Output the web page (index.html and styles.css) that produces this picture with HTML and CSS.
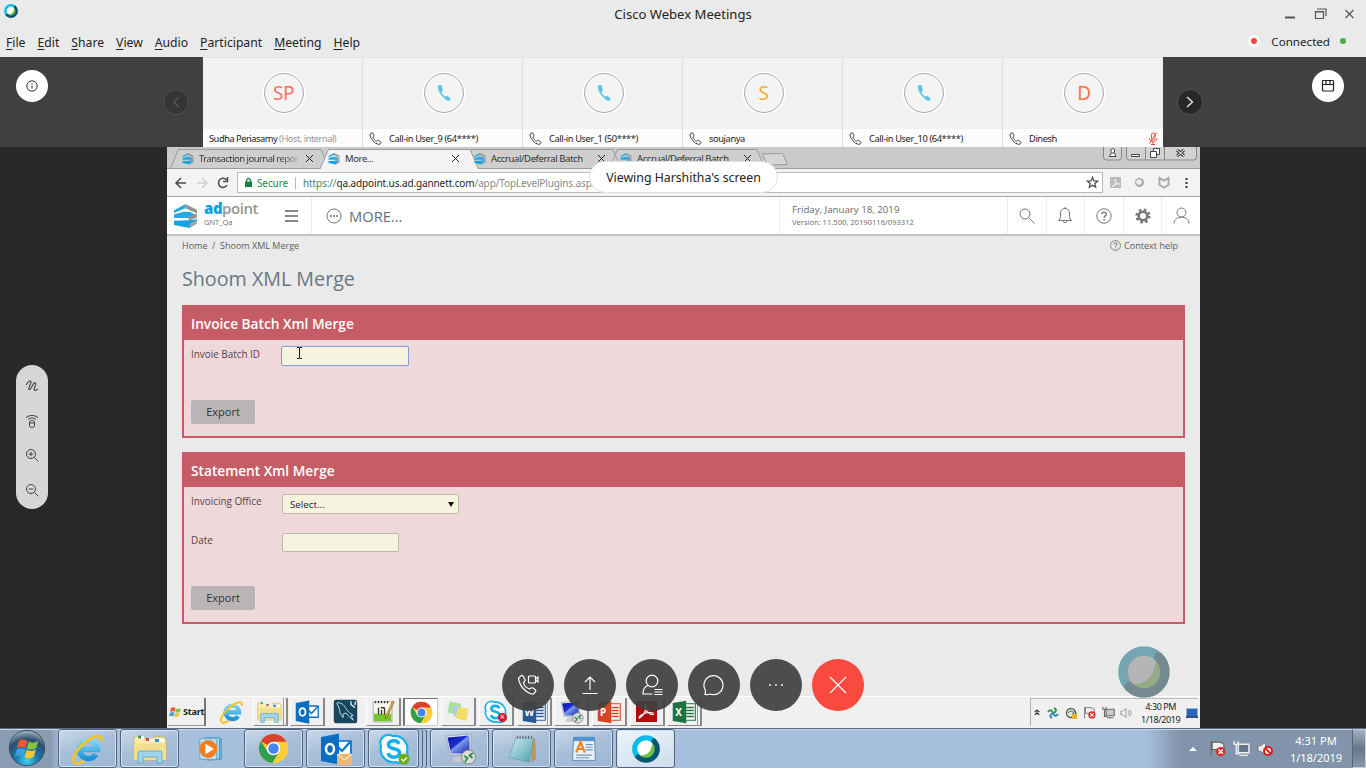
FILE: index.html
```html
<!DOCTYPE html>
<html lang="en">
<head>
<meta charset="utf-8">
<title>Cisco Webex Meetings</title>
<link rel="stylesheet" href="styles.css">
</head>
<body>
<svg class="defs" width="0" height="0">
  <defs>
    <linearGradient id="gScreen" x1="0" y1="0" x2="1" y2="1"><stop offset="0" stop-color="#0a12a8"/><stop offset=".45" stop-color="#1c2fd0"/><stop offset=".5" stop-color="#7d9bf0"/><stop offset="1" stop-color="#0f1fae"/></linearGradient>
    <linearGradient id="gIe" x1="0" y1="0" x2="0" y2="1"><stop offset="0" stop-color="#7fd6f7"/><stop offset="1" stop-color="#1e93d6"/></linearGradient>
    <linearGradient id="gFolder" x1="0" y1="0" x2="0" y2="1"><stop offset="0" stop-color="#fdf3b8"/><stop offset="1" stop-color="#e8c766"/></linearGradient>
    <radialGradient id="gOrb" cx=".5" cy=".85" r=".8"><stop offset="0" stop-color="#3fd5f5"/><stop offset=".4" stop-color="#1877a8"/><stop offset=".75" stop-color="#2b4f6e"/><stop offset="1" stop-color="#8fa6b8"/></radialGradient>
    <linearGradient id="gNote" x1="0" y1="0" x2="1" y2="1"><stop offset="0" stop-color="#d3eef2"/><stop offset="1" stop-color="#4a9fb0"/></linearGradient>
  </defs>
  <symbol id="phone" viewBox="0 0 24 24"><path d="M3 2.500 5.500 1.500c.6-.2 1.200 0 1.500.5L9.200 6.800c.3.600.1 1.200-.4 1.500L7.200 9.500c1.200 3.200 4 6.200 7.200 7.600l1.700-1.400c.4-.4 1.100-.5 1.600-.1l4.100 3c.5.4.6 1 .2 1.500l-1.600 1.900c-.7.9-1.900 1.200-3 .8C9.500 20.500 3.500 13.600 1.700 5.600 1.400 4.300 1.900 3.100 3 2.500z" fill="none" stroke="currentColor" stroke-width="1.600"/></symbol>
  <symbol id="handset" viewBox="0 0 16 20"><path d="M1 1h4.500L6.500 7 5 9c.8 2 2.200 3.800 4.500 5.200L11.500 13l3.500 2.500V19c-3 0-6.500-2-9.500-6C2 9 .8 5 1 1z" fill="#5fc3e8"/></symbol>
  <symbol id="ring" viewBox="0 0 52 52"><circle cx="26" cy="26" r="18" fill="var(--core)"/><path d="M38 12a18 18 0 1 1-26 26C28 40 38 29 38 12z" fill="var(--leaf)"/><path d="M11.150 40.850A21 21 0 0 1 40.850 11.150" fill="none" stroke="var(--light)" stroke-width="9.500"/><path d="M40.850 11.150A21 21 0 0 1 11.150 40.850" fill="none" stroke="var(--dark)" stroke-width="9.500" stroke-linecap="round"/></symbol>
  <symbol id="adp" viewBox="0 0 24 24"><path d="M1 7 12 1v4L1 9.500z" fill="#2ba7df"/><path d="m12 1 11 5.500v3.500L12 5z" fill="#9a9591"/><path d="m1 11 9-2.500h6L23 12l-8 2.500H1z" fill="#2ba7df"/><path d="m15 13.500 8-3.500v4l-8 3z" fill="#9a9591"/><path d="m1 17 14-.5 8-1v3L16 24 1 21z" fill="#13a3e4"/><path d="m16 20 7-3.500v3.500l-7 4z" fill="#aaa5a0"/></symbol>
  <symbol id="ie" viewBox="0 0 32 32"><path d="M24 21.500A9 9 0 1 1 25.500 16.500H10" fill="none" stroke="url(#gIe)" stroke-width="5.600"/><path d="M9.500 15.800h16" stroke="#55bbea" stroke-width="3.800"/><path d="M29 8c1.500-5-3-7-10-2.500C9 11-1.500 24 2 29c2 3 7 .5 10-1.500" fill="none" stroke="#f5c526" stroke-width="2.700"/></symbol>
  <symbol id="folder" viewBox="0 0 34 32"><path d="M1 4h10l1 2h9V4h10l2 3v20H1z" fill="url(#gFolder)" stroke="#d4b050" stroke-width=".8"/><path d="M4 3h7v3H4z" fill="#fff"/><path d="M5 2.500h3v3H5z" fill="#2aa33a"/><path d="M13 5.500h8v3h-8z" fill="#fff"/><path d="M13 5h3v3h-3z" fill="#d34b3b"/><path d="M22 6h9v3h-9z" fill="#fff"/><path d="M22 6h4v3h-4z" fill="#3c8fd6"/><path d="M1 11h32v16H1z" fill="#f3dd91"/><path d="M5 30V20q0-2 2-2h20q2 0 2 2v10h-5v-6H10v6z" fill="#9fd3ee" stroke="#5fa7cc" stroke-width=".9"/></symbol>
  <symbol id="wmp" viewBox="0 0 32 32"><path d="m11 4 15 1v22l-15 1z" fill="#79b7dd" stroke="#5395c0"/><path d="M8 4h16v23H8z" fill="#a5d2ea" stroke="#5395c0"/><path d="M3 5h18v22H3z" fill="#bbdff0" stroke="#6aa5c8"/><circle cx="12" cy="16" r="9.500" fill="#f57d20"/><path d="m9 10.500 9 5.500-9 5.500z" fill="#fff"/></symbol>
  <symbol id="chrome" viewBox="0 0 32 32"><circle cx="16" cy="16" r="15" fill="#fccd3a"/><path d="M16 16 3 8.500a15 15 0 0 1 26.500 1.200H16z" fill="#d8412f"/><path d="M3 8.500 10.500 20 16 16l5.500 4L15 31A15 15 0 0 1 3 8.500z" fill="#2f9e4d"/><path d="M16 9h13.300A15 15 0 0 1 15 31l7.500-12z" fill="#fccd3a"/><circle cx="16" cy="16" r="7" fill="#fff"/><circle cx="16" cy="16" r="5.400" fill="#4384f3"/></symbol>
  <symbol id="outlook" viewBox="0 0 32 32"><path d="M16 8h15v15H16z" fill="#fff" stroke="#0a6fc2" stroke-width="1.700"/><path d="m17 13 5 5 8-9" fill="none" stroke="#0a6fc2" stroke-width="2"/><path d="m1 4 18-3.500v31L1 28z" fill="#0a6fc2"/><ellipse cx="10" cy="16" rx="4" ry="5" fill="none" stroke="#fff" stroke-width="2.500"/></symbol>
  <symbol id="skype" viewBox="0 0 32 32"><path d="M9 2a8 8 0 0 1 6 1 13 13 0 0 1 14 16 8 8 0 0 1-11 10A13 13 0 0 1 3 13 8 8 0 0 1 9 2z" fill="#fff" stroke="#16b0ee" stroke-width="2.200"/><path d="M21 11c-1-2.500-3-3.300-5-3.300-3 0-5.500 1.500-5.500 4 0 5.500 11 2.500 11 8 0 3-2.500 4.500-5.500 4.500-2.800 0-5-1.200-6-4" fill="none" stroke="#16aeea" stroke-width="3.600"/></symbol>
  <symbol id="rdp" viewBox="0 0 32 32"><path d="m10 24 9-1 3 6H8z" fill="#c5c8cc"/><path d="m2 3 25-2v21L6 22z" fill="#e5e9f0" stroke="#8d97a6" stroke-width=".7"/><path d="m3.500 4.500 22-2v18L7 20.500z" fill="url(#gScreen)"/><circle cx="24.500" cy="24" r="7" fill="#d9dbdc" stroke="#888"/><path d="m20 23 3.500 2-2.500 4m8-9-3.500 2.500 3 2.500" fill="none" stroke="#268b43" stroke-width="1.700"/></symbol>
  <symbol id="notepad" viewBox="0 0 32 32"><path d="m26 4 4 1 1 22-5 3z" fill="#b99957"/><path d="m10 4 18 1-4 25-22-5z" fill="url(#gNote)" stroke="#6a99a5" stroke-width=".6"/><path d="M11 2v3m3-3v3m3-3v3m3-3v3m3-3v3m3-3v3" stroke="#555"/></symbol>
  <symbol id="wordpad" viewBox="0 0 32 32"><path d="M4 3h24l1 26H3z" fill="#e9f1fa" stroke="#5b84ad"/><path d="M4 2h24v5H4z" fill="#5595cf"/><path d="M18 11h8m-8 3h8m-8 3h8M7 23h18M7 26h15" stroke="#6f96bf" stroke-width="1.300"/><path d="M7 20 12 8l5 12M9 16h6" fill="none" stroke="#f08020" stroke-width="2.500"/></symbol>
  <symbol id="mysql" viewBox="0 0 32 32"><rect x="1" y="1" width="30" height="30" rx="3" fill="#17465f"/><path d="M5 5c5-1 9 2 12 8 3 4 6 6 9 8l-3 .500 3 5.500-6-5-3-4-4 1 0 5-4-6C9 14 7 10 5 5z" fill="none" stroke="#c6dbe4" stroke-width="1.200"/><path d="M23 3v4l5 4M29 3l-1 5" stroke="#dce9ee" stroke-width="1.800" fill="none"/></symbol>
  <symbol id="npp" viewBox="0 0 32 32"><path d="M3 3h25v27H3z" fill="#f7f7f0" stroke="#999"/><path d="M4 19h23v10H4z" fill="#75c62c"/><path d="M10 11v9m3-9h5m-4 3v6m4-9v9M6 2v3m4-3v3m4-3v3m4-3v3m4-3v3" stroke="#333" stroke-width="1.700"/><path d="m29 2 2 1-9 20-3 3 1-5z" fill="#e9ae29" stroke="#66521e" stroke-width=".7"/></symbol>
  <symbol id="sticky" viewBox="0 0 32 32"><path d="m5 2 15 3-3 15-15-3z" fill="#a9dfa0"/><path d="m8 10 12-3 3 12-12 3z" fill="#a9cdea"/><path d="m16 9 14 3-3 16-14-4z" fill="#f3dd69"/></symbol>
  <symbol id="office" viewBox="0 0 32 32"><path d="M15 5h16v22H15z" fill="#fff" stroke="var(--c)" stroke-width="1.500"/><path d="M19 10h10m-10 4h10m-10 4h10m-10 4h10" stroke="var(--c)" stroke-width="1.700"/><path d="m1 4 18-3v30L1 28z" fill="var(--c)"/></symbol>
  <symbol id="flag" viewBox="0 0 16 16"><path d="M2 1v14M3 2h7l4 2v5H3z" fill="#eef0f2" stroke="#666" stroke-width="1"/><circle cx="11" cy="11" r="4.500" fill="#d92f2b"/><path d="m9 9 4 4m0-4-4 4" stroke="#fff" stroke-width="1.400"/></symbol>
  <symbol id="net" viewBox="0 0 16 16"><path d="M5 4h10v8H5z" fill="var(--s,#66768a)" stroke="var(--e,#eee)" stroke-width="1.400"/><path d="M6 14.500h8M1 1v3h4V1M3 4v9h3" fill="none" stroke="var(--e,#eee)" stroke-width="1.300"/></symbol>
  <symbol id="spk" viewBox="0 0 16 16"><path d="M1 5.500h2.500L8 2v12L3.500 10.500H1z" fill="#eee" stroke="#777" stroke-width=".8"/></symbol>
  <symbol id="winflag" viewBox="0 0 20 20"><path d="M3 4c3-2 5-1 7 0L8.500 9.500C6.500 8.500 4 8.500 1.500 10z" fill="#f0562b"/><path d="M11 4.500c2 1 4 1.500 7.500-.5L17 9.500c-3 2-5 1.500-7.500.5z" fill="#86c440"/><path d="M1.300 11c3-1.700 5-1.300 7-.3L7 16.500c-2-1-4-1.500-7.200.3z" fill="#3d9fe0"/><path d="M9.300 11c2 1 4 1.500 7.400-.3L15 16.500c-3 2-5 1.500-7.300.5z" fill="#fbc52d"/></symbol>
  <symbol id="help" viewBox="0 0 16 16"><circle cx="8" cy="8" r="7.200" fill="none" stroke="currentColor" stroke-width="1"/><path d="M5.800 6.300c0-3 4.500-2.800 4.500-.2 0 1.800-2.200 1.700-2.200 3.700M8.100 11v1.400" fill="none" stroke="currentColor" stroke-width="1.400"/></symbol>
</svg>

<header class="titlebar">
  <div class="caption">
    <svg class="applogo ring" width="14" height="14"><use href="#ring"/></svg>
    <span class="apptitle">Cisco Webex Meetings</span>
    <svg class="winbtns" width="72" height="14" fill="none" stroke="#555"><path d="M1 10.500h10" stroke-width="2"/><path d="M31.500 4.500h8v7h-8zM31 5h9M33 2h9v7" stroke-width="1.200"/><path d="m61.500 3 8 8m0-8-8 8" stroke-width="1.200"/></svg>
  </div>
  <div class="menurow">
    <nav class="menu"><span><u>F</u>ile</span><span><u>E</u>dit</span><span><u>S</u>hare</span><span><u>V</u>iew</span><span><u>A</u>udio</span><span><u>P</u>articipant</span><span><u>M</u>eeting</span><span><u>H</u>elp</span></nav>
    <div class="status"><i class="rec"></i><span>Connected</span><i class="ok"></i></div>
  </div>
</header>

<section class="strip">
  <div class="stripside left"><span class="round"><svg width="12" height="12" fill="none" stroke="#333"><circle cx="6" cy="6" r="5.200"/><path d="M6 5.500v3M6 3.500v1"/></svg></span><span class="arrow dim"><svg width="8" height="12" fill="none" stroke="#707070"><path d="M7 1 1.500 6 7 11"/></svg></span></div>
  <div class="tiles">
    <div class="tile"><div class="face"><b class="av" style="color:#f96f66">SP</b></div><div class="who host"><span>Sudha Periasamy <em>(Host, internal)</em></span></div></div>
    <div class="tile"><div class="face"><b class="av"><svg width="14" height="18"><use href="#handset"/></svg></b></div><div class="who"><svg width="13" height="13"><use href="#phone"/></svg><span>Call-in User_9 (64****)</span></div></div>
    <div class="tile"><div class="face"><b class="av"><svg width="14" height="18"><use href="#handset"/></svg></b></div><div class="who"><svg width="13" height="13"><use href="#phone"/></svg><span>Call-in User_1 (50****)</span></div></div>
    <div class="tile"><div class="face"><b class="av" style="color:#f5ae2f">S</b></div><div class="who"><svg width="13" height="13"><use href="#phone"/></svg><span>soujanya</span></div></div>
    <div class="tile"><div class="face"><b class="av"><svg width="14" height="18"><use href="#handset"/></svg></b></div><div class="who"><svg width="13" height="13"><use href="#phone"/></svg><span>Call-in User_10 (64****)</span></div></div>
    <div class="tile"><div class="face"><b class="av" style="color:#fa7440">D</b></div><div class="who"><svg width="13" height="13"><use href="#phone"/></svg><span>Dinesh</span><svg class="mute" width="10" height="13" fill="none" stroke="#f4483f"><rect x="3.500" y="1" width="3.500" height="7" rx="1.700"/><path d="M1.500 6c0 5 7.500 5 7.500 0M5 10v2.500M3 12.500h4M8.500.5l-7 11"/></svg></div></div>
  </div>
  <div class="stripside right"><span class="arrow"><svg width="8" height="12" fill="none" stroke="#eee" stroke-width="1.300"><path d="m1 1 5.500 5L1 11"/></svg></span><span class="round"><svg width="14" height="14" fill="none" stroke="#222" stroke-width="1.200"><rect x="1.500" y="1.500" width="11" height="10.500" rx="1"/><path d="M1.500 5.500h11M5 2v3M9 2v3"/></svg></span></div>
</section>

<main class="stage">
  <aside class="rail">
    <div class="tools">
      <svg width="14" height="14" viewBox="0 0 14 14" fill="none" stroke="#444" stroke-width="1.100"><path d="M1 6C4 .5 7.500 1 5.500 5L4 8.500c-1 3 1 2.500 2.500 0L8 5.500c1.500-3 3.500-2 2.500.5L9.500 9c-1 3 .5 3 3.500 1"/></svg>
      <svg width="14" height="14" viewBox="0 0 14 14" fill="none" stroke="#444"><rect x="4.500" y="6.500" width="5" height="7" rx="2.300"/><path d="M4.500 9h5M1 3.500Q7-.8 13 3.500M3 5.500Q7 2.200 11 5.500"/></svg>
      <svg width="14" height="14" viewBox="0 0 14 14" fill="none" stroke="#444"><circle cx="6" cy="6" r="4.500"/><path d="m9.300 9.300 4 4M6 3.800v4.400M3.800 6h4.400"/></svg>
      <svg width="14" height="14" viewBox="0 0 14 14" fill="none" stroke="#444"><circle cx="6" cy="6" r="4.500"/><path d="m9.300 9.300 4 4M3.800 6h4.400"/></svg>
    </div>
  </aside>

  <div class="browser">
    <div class="tabs">
      <svg class="tabshapes" width="1033" height="22" fill="#cfcfcf" stroke="#9b9b9b"><path d="M3.500 21.500 11.500 2.500H154l8 19z"/><path d="M442.500 21.500 450.500 2.500H590l8 19zM296.500 21.500 304.500 2.500H446l8 19z"/><path d="m595.500 7 19-.5q1 0 1.500 1l4.500 10-18 .5q-2 0-2.500-1z" fill="#d6d6d6"/><path d="M0 21.500h1033"/><path d="m152.500 23 9-20.500h141.500l9 20.500z" fill="#f3f2f4"/></svg>
      <div class="tab"><svg width="12" height="13"><use href="#adp"/></svg><span class="fade">Transaction journal repor</span><i class="x"></i></div>
      <div class="tab"><svg width="12" height="13"><use href="#adp"/></svg><span>More...</span><i class="x"></i></div>
      <div class="tab"><svg width="12" height="13"><use href="#adp"/></svg><span>Accrual/Deferral Batch</span><i class="x"></i></div>
      <div class="tab"><svg width="12" height="13"><use href="#adp"/></svg><span>Accrual/Deferral Batch</span><i class="x"></i></div>
      <svg class="chromebtns" width="96" height="14" fill="none" stroke="#858585"><path d="M1.500 0v10q0 3 3 3h12q3 0 3-3V0M24.500 0v10q0 3 3 3h64q3 0 3-3V0M43.500 0v13M62.500 0v13" fill="#d2d2d2"/><path d="M7.500 9.500h6.500L12.500 6h-3.500zM9 5.500q-1-4 1.700-4t1.800 4" fill="#fff" stroke="#444"/><path d="M29.500 7.500h8v2h-8z" fill="#fff" stroke="#444"/><path d="M51.500 1.500h6v6h-6z" fill="#fff" stroke="#444"/><path d="M48.500 4.500h6v6h-6z" fill="#fff" stroke="#444"/><path d="m75 3 7 6m0-6-7 6" stroke="#444" stroke-width="3"/><path d="m75 3 7 6m0-6-7 6" stroke="#fff"/></svg>
    </div>
    <div class="toolbar">
      <svg width="62" height="16" fill="none" stroke="#4b4b4b" stroke-width="1.500"><path d="M13 8H3m5-5L3 8l5 5"/><path d="M24 8h10m-5-5 5 5-5 5" stroke="#d0d0d0"/><path d="M53.500 5a4.500 4.500 0 1 0 .5 5M54.500 2v4.500H50"/></svg>
      <div class="omni">
        <svg width="9" height="11"><path d="M2.500 5V3q2-3 4 0v2" fill="none" stroke="#1a7f42" stroke-width="1.300"/><path d="M1 4.500h7V10H1z" fill="#1a7f42"/></svg>
        <span class="secure">Secure</span><span class="url"><s>https://</s>qa.adpoint.us.ad.gannett.com<s class="g">/app/TopLevelPlugins.aspx</s></span>
        <svg class="star" width="13" height="13" viewBox="0 0 14 14" fill="none" stroke="#444" stroke-width="1.300"><path d="m7 1.500 1.500 3.800 4 .2-3 2.600 1 4L7 9.900l-3.500 2.200 1-4-3-2.600 4-.2z"/></svg>
      </div>
      <svg class="ext" width="84" height="14"><path d="M1 1h11v11H1z" fill="#bcbcbc"/><path d="M3 10.500c4-2 4.500-6 3.500-7s-1 2 1 3.500 3 2 3 1-3-.5-7 2.500" fill="none" stroke="#f5f5f5"/><circle cx="30.500" cy="6.500" r="4.500" fill="#aaa"/><circle cx="30" cy="6" r="2.800" fill="#eee"/><path d="M50.500 2v7l4.500 2.500L59.500 9V2L55 4.500z" fill="none" stroke="#aaa" stroke-width="2"/><path d="M77.500 2v2m0 2v2m0 2v2" stroke="#444" stroke-width="2.200"/></svg>
    </div>
    <div class="apphead">
      <div class="brand"><svg width="25" height="25"><use href="#adp"/></svg><div><div class="bn"><b>ad</b>point</div><div class="env">GNT_Qa</div></div></div>
      <div class="burger"><i></i><i></i><i></i></div>
      <div class="more"><svg width="16" height="16" fill="none" stroke="#6a7680"><circle cx="8" cy="8" r="7"/><path d="M4 8h2m1 0h2m1 0h2" stroke-width="1.500"/></svg><span>MORE...</span></div>
      <div class="when"><div>Friday, January 18, 2019</div><small>Version: 11.500, 20190116/093312</small></div>
      <div class="hicon"><svg width="16" height="16" fill="none" stroke="#777"><circle cx="6" cy="6" r="5"/><path d="m9.500 9.500 6 6"/></svg></div>
      <div class="hicon"><svg width="16" height="17" fill="none" stroke="#777"><path d="M1.500 13.500h13q-2-1-2-4V6c0-6-9-6-9 0v3.500q0 3-2 4zM6 14q2 3.500 4 0M8 0v1.500"/></svg></div>
      <div class="hicon"><svg width="16" height="16"><use href="#help"/></svg></div>
      <div class="hicon"><svg width="16" height="16" fill="none" stroke="#7b7675"><circle cx="8" cy="8" r="4.300" stroke-width="2.600"/><circle cx="8" cy="8" r="6.400" stroke-width="2.400" stroke-dasharray="2.500 2.527"/></svg></div>
      <div class="hicon"><svg width="17" height="17" fill="none" stroke="#777"><circle cx="8.500" cy="5.500" r="4.500"/><path d="M1 16.500c0-8.500 15-8.500 15 0"/></svg></div>
    </div>
    <div class="crumbs"><span>Home&nbsp; /&nbsp; Shoom XML Merge</span><span class="ctx"><svg width="11" height="11"><use href="#help"/></svg>Context help</span></div>
    <h1>Shoom XML Merge</h1>
    <section class="panel first">
      <h2>Invoice Batch Xml Merge</h2>
      <div class="row"><label>Invoie Batch ID</label><div class="field focus"><svg width="7" height="13" fill="none" stroke="#111"><path d="M1 .5h2l.5.5.5-.5h2M3.500 1v10M1 11.500h2l.5-.5.5.5h2"/></svg></div></div>
      <div class="btn">Export</div>
    </section>
    <section class="panel second">
      <h2>Statement Xml Merge</h2>
      <div class="row"><label>Invoicing Office</label><div class="field select"><span>Select...</span><i></i></div></div>
      <div class="row date"><label>Date</label><div class="field short"></div></div>
      <div class="btn">Export</div>
    </section>

    <div class="innerbar">
      <div class="start"><svg width="13" height="14"><use href="#winflag"/></svg>Start</div>
      <div class="slots">
        <div class="slot flat"><svg width="24" height="24"><use href="#ie"/></svg></div>
        <div class="slot stack"><svg width="25" height="24"><use href="#folder"/></svg></div>
        <div class="slot"><svg width="24" height="24"><use href="#outlook"/></svg></div>
        <div class="slot flat"><svg width="25" height="25"><use href="#mysql"/></svg></div>
        <div class="slot"><svg width="24" height="25"><use href="#npp"/></svg></div>
        <div class="slot on"><svg width="23" height="23"><use href="#chrome"/></svg></div>
        <div class="slot"><svg width="26" height="24"><use href="#sticky"/></svg></div>
        <div class="slot"><svg width="25" height="24"><use href="#skype"/></svg><em class="dot bad">×</em></div>
        <div class="slot stack"><svg width="24" height="24" style="--c:#2b579a"><use href="#office"/></svg><em class="ltr">W</em></div>
        <div class="slot"><svg width="25" height="24"><use href="#rdp"/></svg></div>
        <div class="slot"><svg width="24" height="24" style="--c:#d24726"><use href="#office"/></svg><em class="ltr">P</em></div>
        <div class="slot"><svg width="23" height="23" viewBox="0 0 23 23"><path d="M1 1h21v21H1z" fill="#b30b0b"/><path d="M4.500 18c5-3 7-9 6.500-12.500-.5-2-2-.5-1 2 1.500 4 5 7.500 8 7 1.500-1 0-2-3-2-4 0-9 2-10.500 4-.6 1-.4 1.700 0 1.500z" fill="none" stroke="#fff" stroke-width="1.200"/></svg></div>
        <div class="slot stack"><svg width="24" height="24" style="--c:#1e7145"><use href="#office"/></svg><em class="ltr">X</em></div>
      </div>
      <div class="tray">
        <span class="chev">«</span>
        <svg width="12" height="12" fill="none" stroke-width="2"><path d="M1 5q3-4 5 1M7 1q4 2 0 5" stroke="#3a9b47"/><path d="M11 7q-3 4-5-1M5 11Q1 9 6 6" stroke="#2a83bd"/></svg>
        <svg width="13" height="12"><circle cx="6" cy="6" r="4.500" fill="#dde5dc" stroke="#52694f" stroke-width="1.400"/><path d="M3 6q3-4 6 0" fill="none" stroke="#52694f"/><path d="M7 7h5v5H7z" fill="#e7b32c"/><path d="M8 7V5.500q1.500-2 3 0V7" fill="none" stroke="#555"/></svg>
        <svg width="13" height="13"><use href="#flag"/></svg>
        <svg width="13" height="13" style="--s:#ccc;--e:#666"><use href="#net"/></svg>
        <svg width="12" height="12" viewBox="0 0 16 16"><path d="M1 5.500h2.500L8 2v12L3.500 10.500H1zM11 5q2 3 0 6M13 3q4 5 0 10" fill="none" stroke="#888"/></svg>
        <div class="clock">4:30 PM<br>1/18/2019</div>
        <svg width="12" height="10"><path d="M.5.500h11v8H.5z" fill="#2767bb" stroke="#94b4da"/><path d="M0 8h12v2H0z" fill="#344c76"/></svg>
      </div>
    </div>

    <div class="viewing">Viewing Harshitha's screen</div>
    <svg class="badge ring" width="52" height="52"><use href="#ring"/></svg>
    <div class="controls">
      <span><svg width="22" height="22" viewBox="0 0 22 22" fill="none" stroke="#fff" stroke-width="1.200"><path d="m2.500 3 2-1.500q1-.5 1.500.5L8 5.500q.5 1-.5 2L6.500 8.500c.5 3 3 5.500 6 6.500l1.500-1q1-.5 2 0l2.500 2q.8.800 0 1.700L17 19.500q-1.500 1-4 0Q5 16 2 7q-1-3 .5-4z"/><rect x="11.500" y="2" width="7" height="7" rx="1"/><path d="M18.500 5 21 3v5l-2.500-2"/></svg></span>
      <span><svg width="20" height="20" fill="none" stroke="#fff" stroke-width="1.200"><path d="M10 15V2M5 7l5-5 5 5M2.500 18.500h15"/></svg></span>
      <span><svg width="22" height="22" viewBox="0 0 22 22" fill="none" stroke="#fff" stroke-width="1.200"><circle cx="11" cy="7" r="5.800"/><path d="M6.800 11.500C3 13 2 16 2 20h9.500M13.500 15.500h8m-8 2.500h8m-8 2.500h8"/></svg></span>
      <span><svg width="22" height="22" viewBox="0 0 22 22" fill="none" stroke="#fff" stroke-width="1.200"><path d="M2 20.500q.8-2 .3-4.500A9.500 9.500 0 1 1 7 20q-2 1-5 .5z"/></svg></span>
      <span><svg width="16" height="4" fill="#fff"><circle cx="2" cy="2" r=".9"/><circle cx="8" cy="2" r=".9"/><circle cx="14" cy="2" r=".9"/></svg></span>
      <span class="end"><svg width="18" height="18" stroke="#fff" stroke-width="1.200"><path d="m1 1 16 16m0-16L1 17"/></svg></span>
    </div>
  </div>
</main>

<footer class="taskbar">
  <div class="orb"><svg width="38" height="38"><circle cx="19" cy="19" r="17.700" fill="url(#gOrb)" stroke="#3d5166"/><use href="#winflag" x="7" y="7" width="25" height="25"/></svg></div>
  <div class="apps">
    <div class="app"><svg width="32" height="32"><use href="#ie"/></svg></div>
    <div class="app"><svg width="34" height="32"><use href="#folder"/></svg></div>
    <div class="app bare"><svg width="30" height="30"><use href="#wmp"/></svg></div>
    <div class="app"><svg width="31" height="31"><use href="#chrome"/></svg></div>
    <div class="app"><svg width="32" height="32"><use href="#outlook"/><path d="M17 21h15v11H17z" fill="#f0b676"/><path d="m17 21 7.500 6 7.500-6" fill="none" stroke="#fff"/></svg></div>
    <div class="app multi"><svg width="32" height="32"><use href="#skype"/><circle cx="26" cy="26" r="5.500" fill="#6cad14"/><path d="m23.500 26 2 2 3.500-3.500" fill="none" stroke="#fff" stroke-width="1.300"/></svg></div>
    <div class="app"><svg width="32" height="32"><use href="#rdp"/></svg></div>
    <div class="app"><svg width="32" height="30"><use href="#notepad"/></svg></div>
    <div class="app"><svg width="28" height="30"><use href="#wordpad"/></svg></div>
    <div class="app active"><svg class="ring" width="28" height="28"><use href="#ring"/></svg></div>
  </div>
  <div class="systray">
    <i class="up"></i>
    <svg width="17" height="17"><use href="#flag"/></svg>
    <svg width="17" height="17"><use href="#net"/></svg>
    <svg width="17" height="17"><use href="#spk"/><circle cx="11" cy="11" r="4" fill="#fff" stroke="#d81d1d" stroke-width="2"/><path d="m8 8 6 6" stroke="#d81d1d" stroke-width="2"/></svg>
    <div class="time">4:31 PM<br>1/18/2019</div>
    <i class="desk"></i>
  </div>
</footer>
</body>
</html>
```
FILE: styles.css
```css
* { box-sizing: border-box; }
body { margin: 0; width: 1366px; height: 768px; overflow: hidden; display: flex; flex-direction: column; font-family: "Noto Sans", "Open Sans", sans-serif; color: #222; background: #292929; }
svg { display: block; flex: none; }
.defs { position: absolute; }
.ring { --core: #fff; --leaf: #72bf44; --light: #07bde8; --dark: #055873; }

/* Title bar and menu */
.titlebar { height: 57px; flex: none; background: #eaeaea; }
.caption { height: 28px; display: grid; grid-template-columns: 1fr auto 1fr; align-items: center; padding: 0 10px 0 4px; }
.applogo { align-self: start; margin-top: 4px; }
.apptitle { font-size: 13.100px; line-height: 28px; padding-left: 6px; }
.winbtns { justify-self: end; }
.menurow { height: 29px; display: flex; justify-content: space-between; align-items: center; padding: 0 20px 0 6px; font-size: 12.200px; }
.menu { display: flex; gap: 12px; }
.menu u { text-underline-offset: 2px; }
.status { display: flex; align-items: center; margin-top: -3px; font-size: 11.600px; }
.status i { width: 6px; height: 6px; border-radius: 50%; background: #45b049; margin-left: 10px; }
.status .rec { background: #f9453c; border: 3px solid #fff; width: 12px; height: 12px; margin: 0 11px 0 0; }

/* Participant strip */
.strip { height: 90px; flex: none; display: flex; background: #404040; }
.stripside { width: 203px; display: flex; }
.left { justify-content: space-between; padding: 13px 14px 0 16px; }
.right { padding: 13px 22px 0 14px; justify-content: space-between; }
.round { width: 32px; height: 32px; border-radius: 50%; background: #fff; display: grid; place-items: center; }
.arrow { width: 26px; height: 26px; border-radius: 50%; margin-top: 19px; background: #282828; border: 1px solid #505050; display: grid; place-items: center; }
.dim { background: #353535; }
.tiles { width: 960px; display: grid; grid-template-columns: repeat(6, 1fr); }
.tile { border-right: 1px solid #dcdcdc; border-top: 1px solid #e2e2e2; background: #f1f1f1; }
.tile:last-child { border-right: 0; }
.face { height: 71px; display: grid; place-items: center; padding: 0 0 2px 2px; }
.av { width: 40px; height: 40px; border-radius: 50%; border: 1px solid #aaa; box-shadow: 0 0 0 1.500px #fff; background: #f4f4f4; display: grid; place-items: center; font-weight: 400; font-size: 19px; letter-spacing: -.5px; }
.who { height: 18px; background: #fcfcfc; display: flex; align-items: center; font-size: 9.300px; letter-spacing: -.41px; padding: 0 5px 0 6px; }
.who span { margin-left: 7px; white-space: nowrap; }
.host span { margin-left: 0; }
.host { letter-spacing: -.48px; }
.who em { font-style: normal; color: #999; }
.mute { margin-left: auto; }

/* Shared screen */
.stage { height: 581px; flex: none; display: flex; }
.rail { width: 167px; padding: 218px 0 0 16px; }
.tools { width: 32px; height: 144px; border-radius: 16px; background: #d6d6d6; display: flex; flex-direction: column; align-items: center; justify-content: space-between; padding: 14px 0 12px; }
.browser { width: 1033px; position: relative; display: flex; flex-direction: column; background: #eaeaea; font-family: "Open Sans", "Noto Sans", sans-serif; }
.tabs { height: 22px; flex: none; display: flex; position: relative; background: #cacaca; padding-left: 14px; }
.tabshapes { position: absolute; left: 0; top: 0; }
.tab { width: 146px; display: flex; align-items: center; position: relative; font: 9.500px "Noto Sans", sans-serif; letter-spacing: -.4px; color: #333; padding: 1px 14px 0 1px; }
.tab span { margin-left: 5px; white-space: nowrap; }
.tab .fade { background: linear-gradient(90deg, #333 80%, #aaa); background-clip: text; -webkit-background-clip: text; color: transparent; letter-spacing: -.55px; }
.x { width: 7px; height: 7px; flex: none; margin-left: auto; background: linear-gradient(45deg, transparent 43%, #222 43% 57%, transparent 57%), linear-gradient(-45deg, transparent 43%, #222 43% 57%, transparent 57%); }
.chromebtns { margin-left: auto; margin-right: 2px; }
.toolbar { height: 28px; flex: none; background: #f3f2f4; display: flex; align-items: center; padding: 0 5px 0 6px; border-bottom: 1px solid #a6a6a6; }
.omni { width: 866px; height: 21px; background: #fff; border: 1px solid #bbb; margin-left: 2px; display: flex; align-items: center; padding: 0 3px 0 6px; font: 10px "Noto Sans", sans-serif; letter-spacing: -.12px; }
.secure { color: #27854c; margin-left: 4px; padding-right: 7px; border-right: 1px solid #bbb; line-height: 12px; }
.url { margin-left: 7px; }
.url s { text-decoration: none; color: #4d7f60; }
.url .g { color: #888; }
.star { margin-left: auto; }
.ext { margin-left: 6px; }
.apphead { height: 39px; flex: none; background: #fff; border-bottom: 2px solid #c2c2c2; display: flex; align-items: stretch; color: #6a6a6a; }
.brand { width: 118px; padding-left: 6px; display: flex; align-items: center; gap: 6px; }
.bn { font-size: 15px; line-height: 14px; color: #999391; font-weight: 600; letter-spacing: -.45px; margin-top: -3px; }
.bn b { color: #11a0df; }
.env { font-size: 7.500px; line-height: 9px; margin-top: 3px; }
.burger { width: 27px; border-right: 1px solid #eee; display: flex; flex-direction: column; justify-content: center; gap: 3px; }
.burger i { width: 13px; height: 2px; background: #888; }
.more { width: 467px; display: flex; align-items: center; gap: 7px; padding-left: 14px; font-size: 14.700px; color: #5f6f7c; }
.when { width: 228px; border-left: 1px solid #eee; padding: 6px 0 0 12px; font-size: 9.700px; line-height: 14px; }
.when small { display: block; font-size: 7.600px; line-height: 11px; }
.hicon { width: 38.600px; border-left: 1px solid #eee; display: grid; place-items: center; color: #777; }
.crumbs { height: 22px; flex: none; display: flex; justify-content: space-between; align-items: center; padding: 0 22px 3px 15px; font-size: 9px; color: #5d5d5d; }
.ctx { display: flex; align-items: center; gap: 3px; font-size: 9.100px; }
h1 { margin: 7px 0 0 15px; font-size: 19.700px; line-height: 27px; font-weight: 400; color: #687783; }
.panel { margin: 14px 15px 0; border: 2px solid #c55c66; background: #efd8d9; height: 132px; flex: none; }
.second { height: 172px; }
.panel.first { margin-top: 13px; height: 133px; }
h2 { margin: 0; height: 33px; line-height: 33px; padding-left: 7px; background: #c55c66; color: #fff; font-size: 13.700px; font-weight: 600; letter-spacing: 0; }
.row { display: flex; height: 33px; padding: 7px 0 0 7px; font-size: 9.900px; color: #514748; }
.row label { width: 91px; line-height: 15px; }
.date { padding-top: 13px; height: 38px; margin-top: 0; }
.field { width: 128px; height: 20px; border: 1px solid #bcb9ad; border-radius: 2px; background: #f6f3de; }
.focus { border: 1.500px solid #7e9fd8; padding: 0 0 0 14px; margin: -1px 0 0 -1px; }
.select { width: 177px; display: flex; justify-content: space-between; align-items: center; padding: 0 4px 0 7px; color: #222; font-size: 9.800px; }
.select i { border: 3px solid transparent; border-top: 5px solid #111; border-bottom: 0; }
.short { width: 117px; height: 19px; }
.btn { width: 64px; height: 24px; margin: 27px 0 0 7px; border-radius: 2px; background: #b9b5b6; color: #333; font-size: 11px; line-height: 23px; text-align: center; }
.second .btn { margin-top: 28px; }

/* Remote taskbar */
.innerbar { margin-top: auto; height: 32px; flex: none; display: flex; background: #f0f0f0; border-top: 1px solid #fff; padding: 1px 2px 2px 1px; }
.start { width: 38px; display: flex; align-items: center; gap: 1px; border-right: 2px solid #777; border-bottom: 1px solid #999; font: bold 9.200px "Noto Sans", sans-serif; letter-spacing: -.3px; padding-left: 1px; }
.slots { margin-left: 9px; display: grid; grid-template-columns: repeat(13, 37.700px); }
.slot { width: 35px; border-right: 2px solid #888; border-bottom: 1.500px solid #888; border-left: 1px solid #fff; display: grid; place-items: center; position: relative; }
.flat { border-color: transparent; }
.on { background: #fff; border: 1px solid #ccc; border-left: 2px solid #777; border-top-color: #777; }
.stack { box-shadow: inset -2px 0 #f0f0f0, inset -3px 0 #999; }
.ltr { position: absolute; left: 7px; top: 8px; font: bold 10px/13px "Noto Sans", sans-serif; color: #fff; }
.dot { position: absolute; right: 5px; bottom: 3px; width: 9px; height: 9px; border-radius: 50%; background: #d9132b; color: #fff; font: 9px/8px "Noto Sans", sans-serif; text-align: center; }
.tray { margin-left: auto; width: 168px; border-left: 1px solid #aaa; border-top: 1px solid #bbb; display: flex; align-items: center; gap: 5.500px; padding-left: 4px; }
.chev { font: bold 11px "Noto Sans", sans-serif; transform: rotate(90deg); }
.clock { font: 9px/13px "Noto Sans", sans-serif; letter-spacing: -.4px; text-align: center; width: 42px; margin: 0 -1px 0 2px; white-space: nowrap; }

/* Meeting overlays */
.viewing { position: absolute; left: 422px; top: 14px; width: 189px; height: 32px; border-radius: 17px; background: #fff; border: 1px solid #e0e0e0; color: #222; font: 12.300px/32px "Noto Sans", sans-serif; text-align: center; }
.badge { position: absolute; left: 951px; top: 499px; --core: #b5b5b5; --leaf: #94a985; --light: #74a5b2; --dark: #758991; }
.controls { position: absolute; left: 335px; top: 512px; display: flex; gap: 10px; }
.controls span { width: 52px; height: 52px; border-radius: 50%; background: rgba(65, 65, 65, .93); display: grid; place-items: center; }
.controls .end { background: #f94a40; }

/* Local taskbar */
.taskbar { height: 40px; display: flex; border-top: 1px solid #5a6b80; background: linear-gradient(90deg, #8a9cb3 0 50px, #a7c0dd 62px 1145px, #8294ab 1180px); box-shadow: inset 0 1px #c5d5e8; }
.orb { width: 58px; padding: 0 0 0 8px; }
.apps { display: grid; grid-template-columns: repeat(10, 62px); }
.app { width: 59px; border: 1px solid #4e6480; border-radius: 3px; box-shadow: inset 0 0 0 1px #d5e1ef; background: linear-gradient(160deg, #cbd9e9, #a8bfd9 45%, #9cb6d3); display: grid; place-items: center; }
.bare { background: none; border: 0; box-shadow: none; }
.active { background: linear-gradient(160deg, #eef4fa, #cddded); }
.multi { width: 51px; box-shadow: inset 0 0 0 1px #d5e1ef, 3px 0 #a9bfda, 4px 0 #4e6480, 7px 0 #a9bfda, 8px 0 #4e6480; }
.systray { margin-left: auto; display: flex; align-items: center; gap: 7px; }
.up { border: 4px solid transparent; border-bottom: 4px solid #fff; border-top: 0; margin-right: 5px; }
.time { color: #fff; font-size: 11px; line-height: 17px; text-align: center; width: 56px; margin-left: 7px; white-space: nowrap; }
.desk { width: 14px; height: 39px; margin-left: 1px; border: 1px solid #c5d0dc; border-left-color: #566679; background: linear-gradient(#a4b0c0, #66778c 50%, #8796aa); }
```
